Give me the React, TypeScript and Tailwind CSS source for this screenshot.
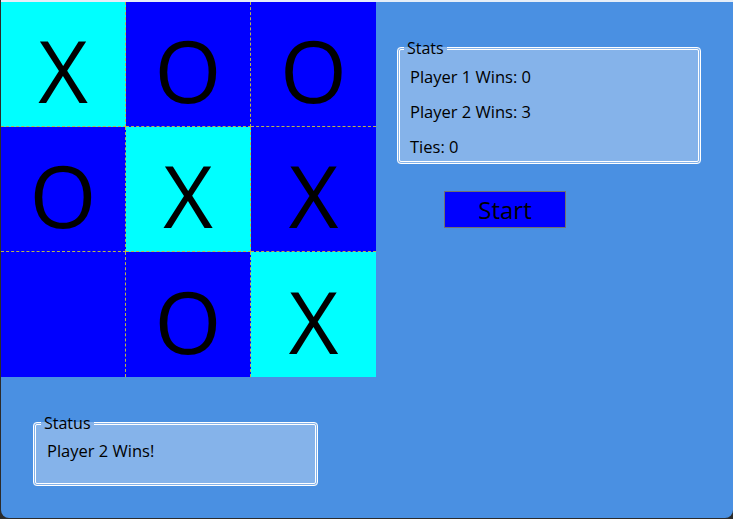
import React from "react";

type Mark = "X" | "O" | "";

const board: { mark: Mark; win: boolean }[] = [
  { mark: "X", win: true },
  { mark: "O", win: false },
  { mark: "O", win: false },
  { mark: "O", win: false },
  { mark: "X", win: true },
  { mark: "X", win: false },
  { mark: "", win: false },
  { mark: "O", win: false },
  { mark: "X", win: true },
];

function Cell({ mark, win, index }: { mark: Mark; win: boolean; index: number }) {
  const col = index % 3;
  const row = Math.floor(index / 3);
  return (
    <div
      className={`relative flex items-center justify-center w-[125px] h-[125px] ${
        win ? "bg-[#00ffff]" : "bg-[#0000ff]"
      } ${col < 2 ? "border-r border-dashed border-r-[#b9b54a]" : ""} ${
        row < 2 ? "border-b border-dashed border-b-[#b9b54a]" : ""
      }`}
    >
      <span className="text-[86px] leading-none text-black pt-[12px]">{mark}</span>
    </div>
  );
}

function GroupBox({
  title,
  className,
  children,
}: {
  title: string;
  className?: string;
  children: React.ReactNode;
}) {
  return (
    <fieldset
      className={`border-[3px] border-double border-white rounded-[4px] bg-[#85b3ea] ${className ?? ""}`}
    >
      <legend className="-ml-[6px] px-[3px] text-[16px] leading-[18px] text-black">{title}</legend>
      {children}
    </fieldset>
  );
}

export default function App() {
  return (
    <div
      className="w-[733px] h-[519px] bg-[#2b2b2b] pl-px pb-px overflow-hidden"
      style={{ fontFamily: '"Open Sans", "Noto Sans", sans-serif' }}
    >
      <div className="w-full h-full bg-[#4a90e2] border-t-2 border-[#e6eef8] rounded-b-[8px] flex">
        <div className="flex flex-col">
          <div className="grid grid-cols-3 w-[375px]">
            {board.map((c, i) => (
              <Cell key={i} index={i} mark={c.mark} win={c.win} />
            ))}
          </div>
          <GroupBox title="Status" className="ml-[32px] mt-[37px] w-[285px] h-[72px] px-[11px]">
            <div className="text-[16.5px] leading-[22px] text-black pt-[8px]">Player 2 Wins!</div>
          </GroupBox>
        </div>
        <div className="flex flex-col ml-[21px] mt-[37px]">
          <GroupBox title="Stats" className="w-[304px] h-[125px] px-[10px]">
            <div className="flex flex-col gap-[13px] text-[16.5px] leading-[22px] text-black pt-[9px]">
              <div>Player 1 Wins: 0</div>
              <div>Player 2 Wins: 3</div>
              <div>Ties: 0</div>
            </div>
          </GroupBox>
          <button className="ml-[47px] mt-[27px] w-[122px] h-[37px] bg-[#0000ff] border border-[#707070] text-black text-[24px] leading-none flex items-center justify-center pt-px">
            Start
          </button>
        </div>
      </div>
    </div>
  );
}
